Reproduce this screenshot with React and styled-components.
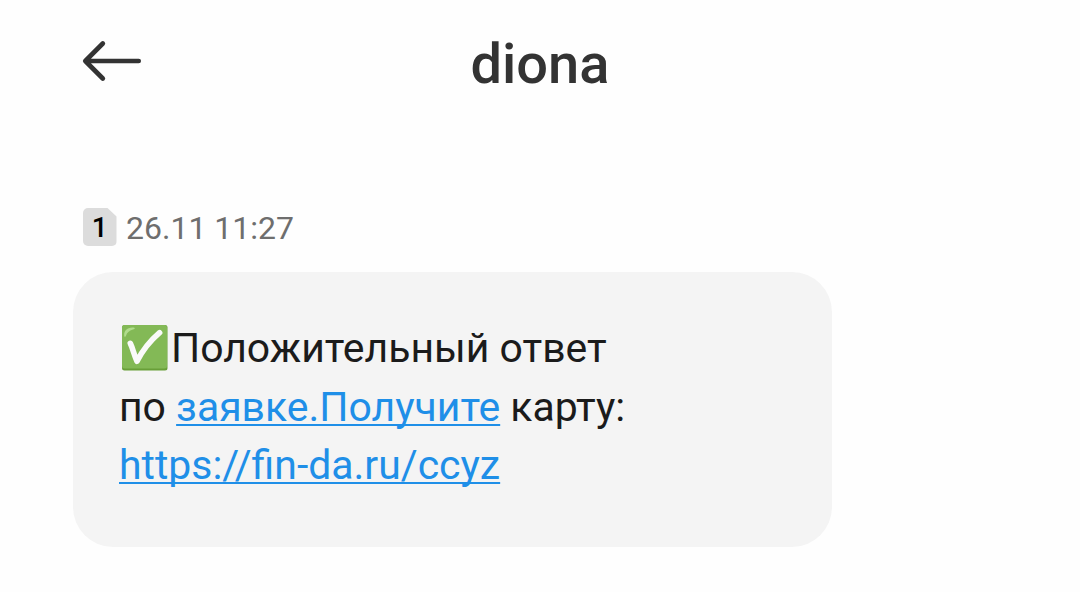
import React from "react";
import styled, { createGlobalStyle } from "styled-components";

const GlobalStyle = createGlobalStyle`
  * {
    box-sizing: border-box;
  }
  body {
    margin: 0;
    background-color: #fefefe;
    font-family: Roboto, "Noto Sans", sans-serif;
  }
`;

const message = {
  sender: "diona",
  sim: 1,
  date: "26.11 11:27",
  link: "https://fin-da.ru/ccyz",
};

const Styled = {
  Page: styled.div`
    width: 100%;
    height: 592px;
    overflow: hidden;
  `,
  Header: styled.header`
    display: grid;
    grid-template-columns: 150px 1fr 150px;
    height: 207.5px;
    padding-top: 31px;
  `,
  BackButton: styled.button`
    width: 62px;
    height: 44px;
    margin: 8px 0 0 81px;
    padding: 0;
    border: none;
    background: none;
    cursor: pointer;
    svg {
      display: block;
    }
  `,
  Title: styled.h1`
    margin: 0;
    color: #333333;
    font-size: 56px;
    font-weight: 500;
    line-height: 66px;
    text-align: center;
  `,
  Meta: styled.div`
    display: flex;
    height: 64px;
    padding-left: 83px;
  `,
  Sim: styled.div`
    display: flex;
    justify-content: center;
    width: 33.5px;
    height: 38.5px;
    background-color: #dcdcdc;
    border-radius: 5px;
    clip-path: polygon(0 0, 24px 0, 33.5px 9px, 33.5px 39px, 0 39px);
    color: #000000;
    font-size: 28px;
    font-weight: 500;
    line-height: 40px;
  `,
  Date: styled.time`
    margin-left: 9.5px;
    color: #6e6e6e;
    font-size: 32px;
    line-height: 41px;
  `,
  Bubble: styled.section`
    width: 759px;
    height: 275px;
    margin-left: 73px;
    padding: 47px 46px;
    background-color: #f4f4f4;
    border-radius: 40px;
  `,
  Line: styled.div`
    display: flex;
    height: ${({ $height }) => $height}px;
    color: #1b1b1b;
    font-size: 40.93px;
    line-height: 58.5px;
    white-space: pre;
    svg {
      flex: none;
      margin: 5.5px 3px 0 2px;
    }
  `,
  Link: styled.a`
    color: #1f8fe8;
    text-decoration: underline;
    text-decoration-thickness: 2px;
    text-underline-offset: 3px;
    text-decoration-skip-ink: none;
  `,
};

const ArrowIcon = () => (
  <svg width="62" height="44" viewBox="0 0 62 44" fill="none">
    <path
      d="M57.7 22H4.5M21.8 4.5L4.3 22L21.8 39.5"
      stroke="#333333"
      strokeWidth="4.7"
      strokeLinecap="round"
      strokeLinejoin="round"
    />
  </svg>
);

const CheckIcon = () => (
  <svg width="47" height="47" viewBox="0 0 47 47" fill="none">
    <rect x="1" y="1" width="45.5" height="45.5" rx="2.5" fill="#689f38" />
    <rect x="1" y="1" width="45" height="43.5" rx="2.5" fill="#83b956" />
    <path
      d="M3.2 11.5C3 7 5.5 3.7 11.5 3.5C14.5 3.4 14.5 4.8 12 5.6C8 6.7 6 8.8 5 11.8C4.4 13.4 3.3 13.2 3.2 11.5Z"
      fill="#b0dc8c"
    />
    <path
      d="M9.3 19.3C11.8 24.5 13 30.5 16 37.3C21.5 26.5 29.5 16.5 38.6 8.7"
      stroke="#fafafa"
      strokeWidth="5.6"
      strokeLinecap="round"
      strokeLinejoin="round"
    />
  </svg>
);

const App = () => {
  return (
    <Styled.Page>
      <GlobalStyle />
      <Styled.Header>
        <Styled.BackButton aria-label="Назад">
          <ArrowIcon />
        </Styled.BackButton>
        <Styled.Title>{message.sender}</Styled.Title>
      </Styled.Header>
      <Styled.Meta>
        <Styled.Sim>{message.sim}</Styled.Sim>
        <Styled.Date>{message.date}</Styled.Date>
      </Styled.Meta>
      <Styled.Bubble>
        <Styled.Line $height={59}>
          <CheckIcon />
          <span>Положительный ответ</span>
        </Styled.Line>
        <Styled.Line $height={58}>
          <span>по </span>
          <Styled.Link href="#">заявке.Получите</Styled.Link>
          <span> карту:</span>
        </Styled.Line>
        <Styled.Line $height={58}>
          <Styled.Link href="#">{message.link}</Styled.Link>
        </Styled.Line>
      </Styled.Bubble>
    </Styled.Page>
  );
};

export default App;
